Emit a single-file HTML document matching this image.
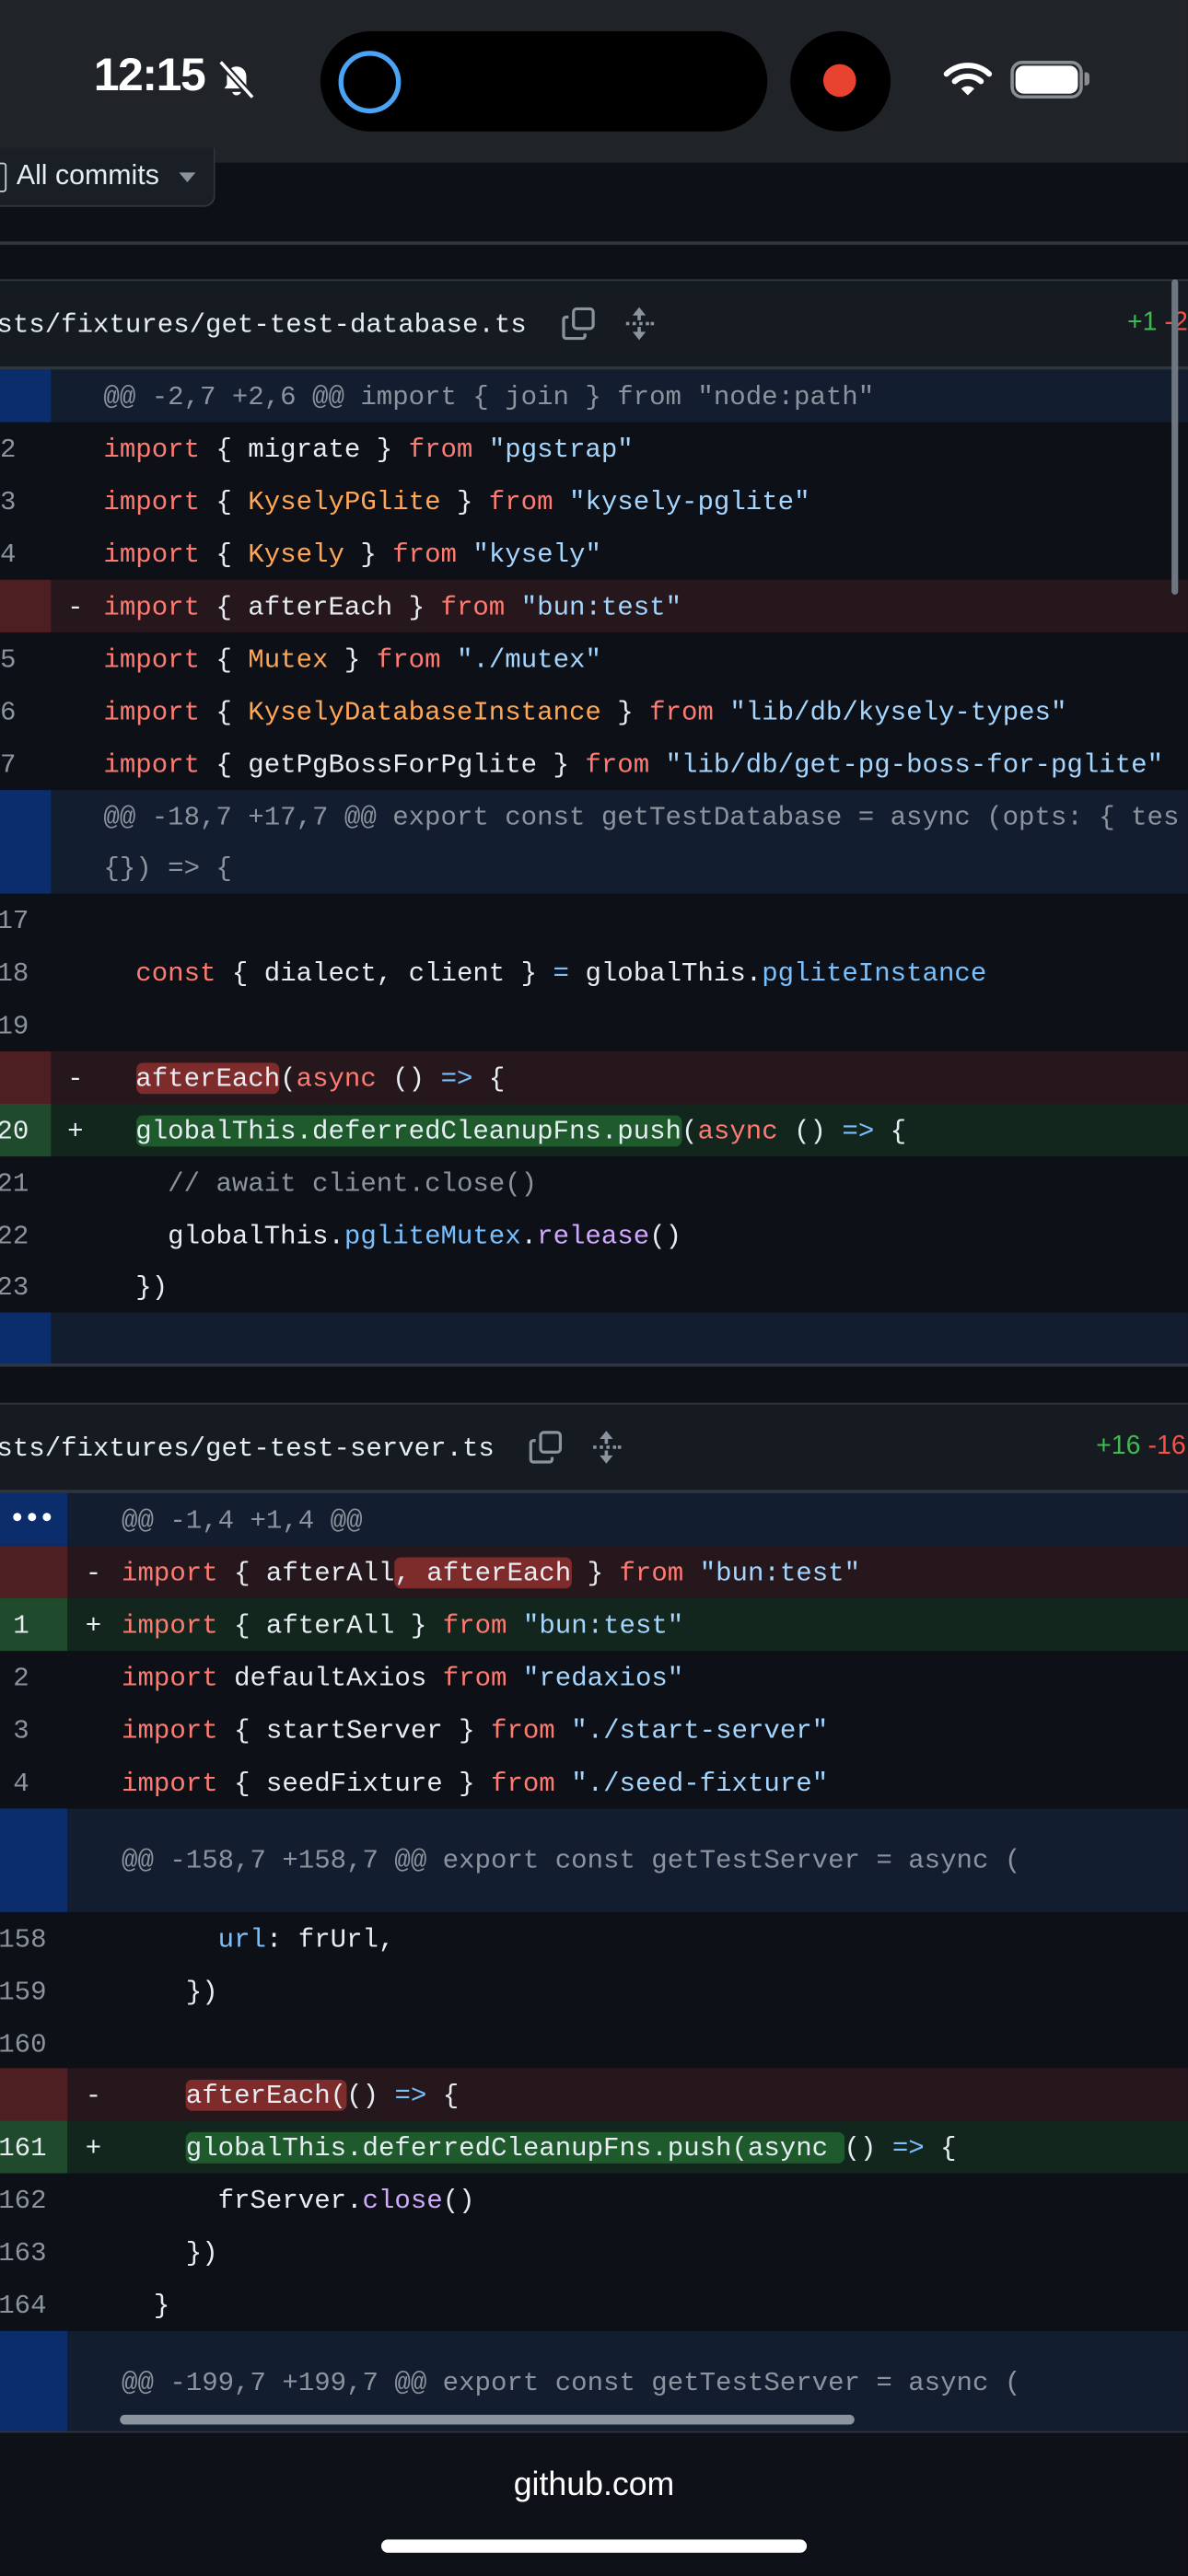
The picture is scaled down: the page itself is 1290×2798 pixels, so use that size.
<!DOCTYPE html>
<html><head><meta charset="utf-8"><style>
*{margin:0;padding:0;box-sizing:border-box}
html,body{width:1290px;height:2796px;overflow:hidden;background:#0d1117}
#w{position:absolute;left:0;top:0;width:723px;height:1568px;transform:scale(1.78423);transform-origin:0 0;background:#0d1117;overflow:hidden;font-family:"Liberation Mono",monospace;color:#e6edf3}
.a{position:absolute}
.r{position:absolute;left:0;width:723px;height:32px;line-height:33px;font-size:16.3px;white-space:pre}
.n{position:absolute;top:0;color:#8b949e;text-align:right}
.s{position:absolute;top:0}
.c{position:absolute;top:0}
.k{color:#ff7b72}.st{color:#a5d6ff}.o{color:#ffa657}.v{color:#79c0ff}.f{color:#d2a8ff}.cm{color:#8b949e}
.h{color:#8b949e}
.del{background:#25171c}.add{background:#12261d}.hk{background:#121d2f}
.hd{background:#7d2b2b;border-radius:4px}.ha{background:#1f5a2c;border-radius:4px}
</style></head><body><div id="w">
<!-- status bar -->
<div class="a" style="left:0;top:0;width:723px;height:99px;background:#202328"></div>
<div class="a" style="left:57px;top:30px;font:600 28px 'Liberation Sans',sans-serif;color:#fff;letter-spacing:-0.8px">12:15</div>
<svg class="a" style="left:129px;top:35px" width="30" height="27" viewBox="0 0 28 24"><path d="M7 17 L8.5 15 V10 a5.5 5.5 0 0 1 11 0 V15 L21 17 Z" fill="#fff"/><path d="M11.5 19 a2.6 2.6 0 0 0 5 0Z" fill="#fff"/><path d="M5 2 L23 22" stroke="#202328" stroke-width="4"/><path d="M5 2 L23 22" stroke="#fff" stroke-width="1.8"/></svg>
<div class="a" style="left:195px;top:19px;width:272px;height:61px;border-radius:31px;background:#000"></div>
<div class="a" style="left:206px;top:31px;width:38px;height:38px;border-radius:50%;border:3.5px solid #4aa3f5"></div>
<div class="a" style="left:481px;top:19px;width:61px;height:61px;border-radius:50%;background:#000"></div>
<div class="a" style="left:501px;top:39px;width:20px;height:20px;border-radius:50%;background:#e8432f"></div>
<svg class="a" style="left:574px;top:36px" width="30" height="24" viewBox="0 0 30 24"><path d="M2 9 A19 19 0 0 1 28 9" stroke="#fff" stroke-width="3.4" fill="none" stroke-linecap="round"/><path d="M7 13.5 A12 12 0 0 1 23 13.5" stroke="#fff" stroke-width="3.4" fill="none" stroke-linecap="round"/><path d="M11 18 L15 22 L19 18 A6 6 0 0 0 11 18Z" fill="#fff"/></svg>
<div class="a" style="left:615px;top:37px;width:44px;height:23px;border-radius:7px;border:2px solid #8a8d92"></div>
<div class="a" style="left:618px;top:40px;width:38px;height:17px;border-radius:5px;background:#fff"></div>
<div class="a" style="left:660px;top:44px;width:3px;height:8px;border-radius:0 2px 2px 0;background:#8a8d92"></div>

<!-- All commits -->
<div class="a" style="left:-10px;top:90px;width:141px;height:36px;border:1px solid #30363d;border-top:none;border-radius:0 0 7px 7px;background:#1a1f26"></div>
<div class="a" style="left:-4px;top:99px;width:8px;height:18px;border:1.5px solid #c9d1d9;border-radius:2px"></div>
<div class="a" style="left:10px;top:97px;font:17px 'Liberation Sans',sans-serif;color:#e6edf3">All commits</div>
<div class="a" style="left:109px;top:105px;width:0;height:0;border-left:5px solid transparent;border-right:5px solid transparent;border-top:6px solid #8b949e"></div>
<div class="a" style="left:0;top:147px;width:723px;height:2px;background:#30363d"></div>

<!-- file 1 header -->
<div class="a" style="left:0;top:170px;width:723px;height:55px;background:#161b22;border-top:1px solid #30363d;border-bottom:2px solid #30363d"></div>
<div class="a" style="left:-2px;top:188px;font-size:16.3px;white-space:pre">sts/fixtures/get-test-database.ts</div>
<svg class="a" style="left:341px;top:186px" width="22" height="22" viewBox="0 0 22 22" fill="none" stroke="#8b949e" stroke-width="1.8"><rect x="8" y="2" width="12" height="12" rx="2"/><path d="M5 7 H3.5 a1.5 1.5 0 0 0 -1.5 1.5 V18.5 a1.5 1.5 0 0 0 1.5 1.5 H13.5 a1.5 1.5 0 0 0 1.5 -1.5 V17"/></svg>
<svg class="a" style="left:379px;top:186px" width="20" height="22" viewBox="0 0 20 22" fill="#8b949e"><path d="M10 1 L14 6 H6Z M10 21 L14 16 H6Z"/><rect x="9" y="5" width="2" height="4"/><rect x="9" y="13" width="2" height="4"/><rect x="2" y="10" width="2" height="2"/><rect x="6" y="10" width="2" height="2"/><rect x="10" y="10" width="2" height="2"/><rect x="14" y="10" width="2" height="2"/><rect x="17" y="10" width="2" height="2"/></svg>
<div class="a" style="left:686px;top:188px;font:16px 'Liberation Sans',sans-serif;white-space:pre"><span style="color:#3fb950">+1</span> <span style="color:#f85149">-2</span></div>

<!-- file1 rows -->
<div class="r hk" style="top:225px"><div class="a" style="left:0;top:0;width:31px;height:32px;background:#0c2d6b"></div><span class="c h" style="left:63px">@@ -2,7 +2,6 @@ import { join } from "node:path"</span></div>
<div class="r" style="top:257px"><span class="n" style="left:0">2</span><span class="c" style="left:63px"><span class="k">import</span> { migrate } <span class="k">from</span> <span class="st">"pgstrap"</span></span></div>
<div class="r" style="top:289px"><span class="n" style="left:0">3</span><span class="c" style="left:63px"><span class="k">import</span> { <span class="o">KyselyPGlite</span> } <span class="k">from</span> <span class="st">"kysely-pglite"</span></span></div>
<div class="r" style="top:321px"><span class="n" style="left:0">4</span><span class="c" style="left:63px"><span class="k">import</span> { <span class="o">Kysely</span> } <span class="k">from</span> <span class="st">"kysely"</span></span></div>
<div class="r del" style="top:353px"><div class="a" style="left:0;top:0;width:31px;height:32px;background:#4e1f22"></div><span class="s" style="left:41px">-</span><span class="c" style="left:63px"><span class="k">import</span> { afterEach } <span class="k">from</span> <span class="st">"bun:test"</span></span></div>
<div class="r" style="top:385px"><span class="n" style="left:0">5</span><span class="c" style="left:63px"><span class="k">import</span> { <span class="o">Mutex</span> } <span class="k">from</span> <span class="st">"./mutex"</span></span></div>
<div class="r" style="top:417px"><span class="n" style="left:0">6</span><span class="c" style="left:63px"><span class="k">import</span> { <span class="o">KyselyDatabaseInstance</span> } <span class="k">from</span> <span class="st">"lib/db/kysely-types"</span></span></div>
<div class="r" style="top:449px"><span class="n" style="left:0">7</span><span class="c" style="left:63px"><span class="k">import</span> { getPgBossForPglite } <span class="k">from</span> <span class="st">"lib/db/get-pg-boss-for-pglite"</span></span></div>
<div class="r hk" style="top:481px;height:63px"><div class="a" style="left:0;top:0;width:31px;height:63px;background:#0c2d6b"></div><span class="c h" style="left:63px;top:0">@@ -18,7 +17,7 @@ export const getTestDatabase = async (opts: { tes</span><span class="c h" style="left:63px;top:31px">{}) =&gt; {</span></div>
<div class="r" style="top:544px"><span class="n" style="left:-2px">17</span></div>
<div class="r" style="top:576px"><span class="n" style="left:-2px">18</span><span class="c" style="left:63px">  <span class="k">const</span> { dialect, client } <span class="v">=</span> globalThis.<span class="v">pgliteInstance</span></span></div>
<div class="r" style="top:608px"><span class="n" style="left:-2px">19</span></div>
<div class="r del" style="top:640px"><div class="a" style="left:0;top:0;width:31px;height:32px;background:#4e1f22"></div><span class="s" style="left:41px">-</span><span class="c" style="left:63px">  <span class="hd">afterEach</span>(<span class="k">async</span> () <span class="v">=&gt;</span> {</span></div>
<div class="r add" style="top:672px"><div class="a" style="left:0;top:0;width:31px;height:32px;background:#1f4a2b"></div><span class="n" style="left:-2px;color:#e6edf3">20</span><span class="s" style="left:41px">+</span><span class="c" style="left:63px">  <span class="ha">globalThis.deferredCleanupFns.push</span>(<span class="k">async</span> () <span class="v">=&gt;</span> {</span></div>
<div class="r" style="top:704px"><span class="n" style="left:-2px">21</span><span class="c" style="left:63px">    <span class="cm">// await client.close()</span></span></div>
<div class="r" style="top:736px"><span class="n" style="left:-2px">22</span><span class="c" style="left:63px">    globalThis.<span class="v">pgliteMutex</span>.<span class="f">release</span>()</span></div>
<div class="r" style="top:767px"><span class="n" style="left:-2px">23</span><span class="c" style="left:63px">  })</span></div>
<div class="r hk" style="top:799px"><div class="a" style="left:0;top:0;width:31px;height:32px;background:#0c2d6b"></div></div>
<div class="a" style="left:0;top:830px;width:723px;height:2px;background:#30363d"></div>
<div class="a" style="left:713px;top:170px;width:4px;height:192px;border-radius:2px;background:#6e7681"></div>

<!-- file 2 header -->
<div class="a" style="left:0;top:854px;width:723px;height:55px;background:#161b22;border-top:1px solid #30363d;border-bottom:2px solid #30363d"></div>
<div class="a" style="left:-2px;top:872px;font-size:16.3px;white-space:pre">sts/fixtures/get-test-server.ts</div>
<svg class="a" style="left:321px;top:870px" width="22" height="22" viewBox="0 0 22 22" fill="none" stroke="#8b949e" stroke-width="1.8"><rect x="8" y="2" width="12" height="12" rx="2"/><path d="M5 7 H3.5 a1.5 1.5 0 0 0 -1.5 1.5 V18.5 a1.5 1.5 0 0 0 1.5 1.5 H13.5 a1.5 1.5 0 0 0 1.5 -1.5 V17"/></svg>
<svg class="a" style="left:359px;top:870px" width="20" height="22" viewBox="0 0 20 22" fill="#8b949e"><path d="M10 1 L14 6 H6Z M10 21 L14 16 H6Z"/><rect x="9" y="5" width="2" height="4"/><rect x="9" y="13" width="2" height="4"/><rect x="2" y="10" width="2" height="2"/><rect x="6" y="10" width="2" height="2"/><rect x="10" y="10" width="2" height="2"/><rect x="14" y="10" width="2" height="2"/><rect x="17" y="10" width="2" height="2"/></svg>
<div class="a" style="left:667px;top:872px;font:16px 'Liberation Sans',sans-serif;white-space:pre"><span style="color:#3fb950">+16</span> <span style="color:#f85149">-16</span></div>

<!-- file2 rows -->
<div class="r hk" style="top:909px"><div class="a" style="left:0;top:0;width:41px;height:32px;background:#0c2d6b"></div><span class="a" style="left:8px;top:12px;width:5px;height:5px;border-radius:50%;background:#fff"></span><span class="a" style="left:17px;top:12px;width:5px;height:5px;border-radius:50%;background:#fff"></span><span class="a" style="left:26px;top:12px;width:5px;height:5px;border-radius:50%;background:#fff"></span><span class="c h" style="left:74px">@@ -1,4 +1,4 @@</span></div>
<div class="r del" style="top:941px"><div class="a" style="left:0;top:0;width:41px;height:32px;background:#4e1f22"></div><span class="s" style="left:52px">-</span><span class="c" style="left:74px"><span class="k">import</span> { afterAll<span class="hd">, afterEach</span> } <span class="k">from</span> <span class="st">"bun:test"</span></span></div>
<div class="r add" style="top:973px"><div class="a" style="left:0;top:0;width:41px;height:32px;background:#1f4a2b"></div><span class="n" style="left:8px;color:#e6edf3">1</span><span class="s" style="left:52px">+</span><span class="c" style="left:74px"><span class="k">import</span> { afterAll } <span class="k">from</span> <span class="st">"bun:test"</span></span></div>
<div class="r" style="top:1005px"><span class="n" style="left:8px">2</span><span class="c" style="left:74px"><span class="k">import</span> defaultAxios <span class="k">from</span> <span class="st">"redaxios"</span></span></div>
<div class="r" style="top:1037px"><span class="n" style="left:8px">3</span><span class="c" style="left:74px"><span class="k">import</span> { startServer } <span class="k">from</span> <span class="st">"./start-server"</span></span></div>
<div class="r" style="top:1069px"><span class="n" style="left:8px">4</span><span class="c" style="left:74px"><span class="k">import</span> { seedFixture } <span class="k">from</span> <span class="st">"./seed-fixture"</span></span></div>
<div class="r hk" style="top:1101px;height:63px;line-height:63px"><div class="a" style="left:0;top:0;width:41px;height:63px;background:#0c2d6b"></div><span class="c h" style="left:74px">@@ -158,7 +158,7 @@ export const getTestServer = async (</span></div>
<div class="r" style="top:1164px"><span class="n" style="left:-1px">158</span><span class="c" style="left:74px">      <span class="v">url</span>: frUrl,</span></div>
<div class="r" style="top:1196px"><span class="n" style="left:-1px">159</span><span class="c" style="left:74px">    })</span></div>
<div class="r" style="top:1228px"><span class="n" style="left:-1px">160</span></div>
<div class="r del" style="top:1259px"><div class="a" style="left:0;top:0;width:41px;height:32px;background:#4e1f22"></div><span class="s" style="left:52px">-</span><span class="c" style="left:74px">    <span class="hd">afterEach(</span>() <span class="v">=&gt;</span> {</span></div>
<div class="r add" style="top:1291px"><div class="a" style="left:0;top:0;width:41px;height:32px;background:#1f4a2b"></div><span class="n" style="left:-1px;color:#e6edf3">161</span><span class="s" style="left:52px">+</span><span class="c" style="left:74px">    <span class="ha">globalThis.deferredCleanupFns.push(async </span>() <span class="v">=&gt;</span> {</span></div>
<div class="r" style="top:1323px"><span class="n" style="left:-1px">162</span><span class="c" style="left:74px">      frServer.<span class="f">close</span>()</span></div>
<div class="r" style="top:1355px"><span class="n" style="left:-1px">163</span><span class="c" style="left:74px">    })</span></div>
<div class="r" style="top:1387px"><span class="n" style="left:-1px">164</span><span class="c" style="left:74px">  }</span></div>
<div class="r hk" style="top:1419px;height:61px;line-height:64px"><div class="a" style="left:0;top:0;width:41px;height:61px;background:#0c2d6b"></div><span class="c h" style="left:74px">@@ -199,7 +199,7 @@ export const getTestServer = async (</span></div>
<div class="a" style="left:73px;top:1470px;width:447px;height:6px;border-radius:3px;background:#8b949e"></div>
<div class="a" style="left:0;top:1480px;width:723px;height:1px;background:#30363d"></div>

<!-- bottom -->
<div class="a" style="left:0;top:1481px;width:723px;height:87px;background:#0e1117"></div>
<div class="a" style="left:0;top:1502px;width:723px;text-align:center;font:20px 'Liberation Sans',sans-serif;color:#fff">github.com</div>
<div class="a" style="left:232px;top:1546px;width:259px;height:8px;border-radius:4px;background:#fff"></div>
</div></body></html>
